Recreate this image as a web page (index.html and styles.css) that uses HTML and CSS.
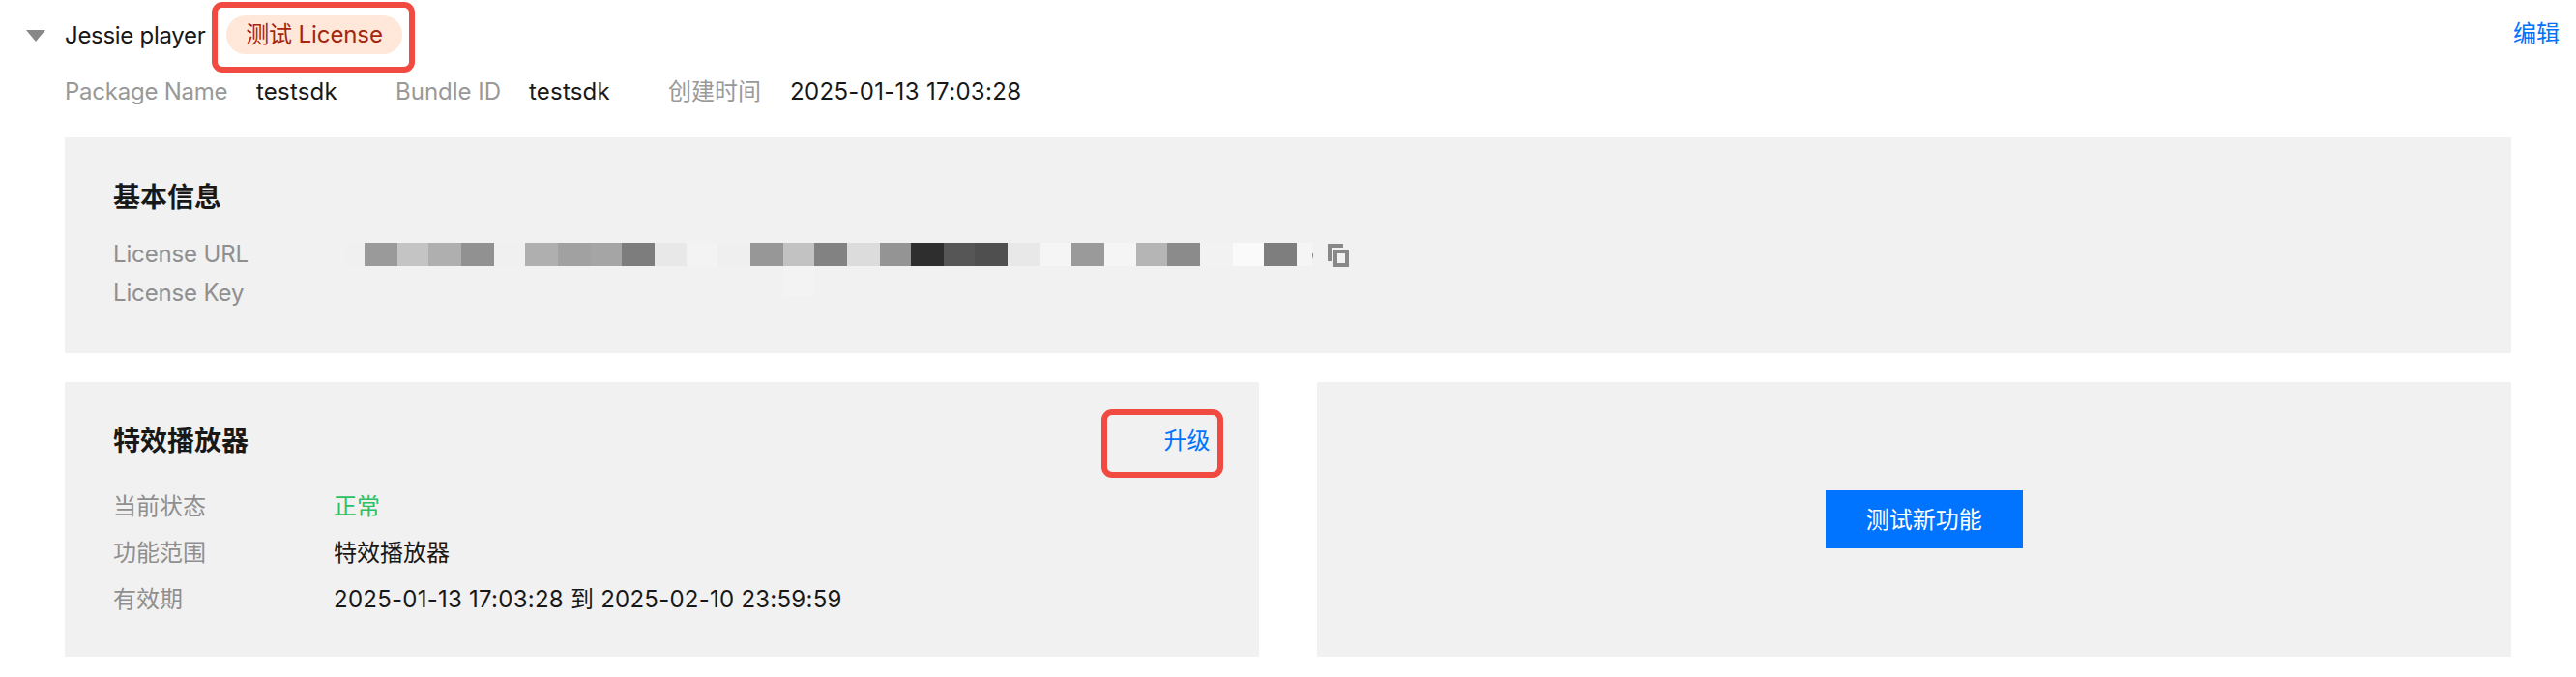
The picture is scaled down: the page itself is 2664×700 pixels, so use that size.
FILE: index.html
```html
<!DOCTYPE html>
<html lang="zh-CN">
  <head>
    <meta charset="UTF-8" />
    <meta name="viewport" content="width=device-width, initial-scale=1.0" />
    <title>License</title>
    <link rel="stylesheet" href="styles.css">
  </head>
  <body>
    <div class="license">
      <div class="header">
        <svg class="arrow" width="20" height="12" viewBox="0 0 20 12">
          <path d="M0 0h20L10 12z" fill="#888" />
        </svg>
        <span class="name">Jessie player</span>
        <div class="tag-wrap">
          <span class="tag">测试 License</span>
          <div class="mark mark-tag"></div>
        </div>
        <a class="link edit">编辑</a>
      </div>

      <div class="meta">
        <span class="label package">Package Name</span>
        <span class="value">testsdk</span>
        <span class="label bundle">Bundle ID</span>
        <span class="value">testsdk</span>
        <span class="label">创建时间</span>
        <span class="value date">2025-01-13 17:03:28</span>
      </div>

      <div class="panel basic">
        <h3>基本信息</h3>
        <div class="row">
          <span class="label">License URL</span>
          <svg class="mosaic" width="1001" height="56" viewBox="0 0 1001 56" shape-rendering="crispEdges">
            <rect x="0" width="20" height="24" fill="#f0f0f0" />
            <rect x="20" width="34" height="23.5" fill="#9a9a9a" />
            <rect x="54" width="32" height="23.5" fill="#c4c4c4" />
            <rect x="86" width="34" height="23.5" fill="#afafaf" />
            <rect x="120" width="34" height="23.5" fill="#919191" />
            <rect x="154" width="32" height="23.5" fill="#f0f0f0" />
            <rect x="186" width="34" height="23.5" fill="#afafaf" />
            <rect x="220" width="34" height="23.5" fill="#a1a1a1" />
            <rect x="254" width="32" height="23.5" fill="#a5a5a5" />
            <rect x="286" width="34" height="23.5" fill="#7d7d7d" />
            <rect x="320" width="33" height="23.5" fill="#e8e8e8" />
            <rect x="353" width="32" height="23.5" fill="#f3f3f3" />
            <rect x="385" width="34" height="23.5" fill="#efefef" />
            <rect x="419" width="34" height="23.5" fill="#979797" />
            <rect x="453" width="32" height="23.5" fill="#c2c2c2" />
            <rect x="485" width="34" height="23.5" fill="#828282" />
            <rect x="519" width="34" height="23.5" fill="#dcdcdc" />
            <rect x="553" width="32" height="23.5" fill="#949494" />
            <rect x="585" width="34" height="23.5" fill="#2e2e2e" />
            <rect x="619" width="32" height="23.5" fill="#565656" />
            <rect x="651" width="34" height="23.5" fill="#4f4f4f" />
            <rect x="685" width="34" height="23.5" fill="#e8e8e8" />
            <rect x="719" width="32" height="23.5" fill="#f5f5f5" />
            <rect x="751" width="34" height="23.5" fill="#9a9a9a" />
            <rect x="785" width="33" height="23.5" fill="#f5f5f5" />
            <rect x="818" width="32" height="23.5" fill="#b5b5b5" />
            <rect x="850" width="34" height="23.5" fill="#8b8b8b" />
            <rect x="884" width="34" height="23.5" fill="#f2f2f2" />
            <rect x="918" width="32" height="23.5" fill="#fafafa" />
            <rect x="950" width="34" height="23.5" fill="#7e7e7e" />
            <rect x="984" width="16" height="23.5" fill="#f5f5f5" />
            <rect x="1000" y="11" width="1" height="4" fill="#8a8a8a" />
            <rect x="1000" y="15" width="1" height="2" fill="#d0d0d0" />
            <rect x="453" y="24" width="32" height="31" fill="#f3f3f3" />
          </svg>
          <svg class="copy" width="22" height="24" viewBox="0 0 22 24">
            <path d="M0 0h16v4H4v14H0z" fill="#888" />
            <path d="M6 6h16v18H6zM10 10v10h8V10z" fill="#888" fill-rule="evenodd" />
          </svg>
        </div>
        <div class="row">
          <span class="label">License Key</span>
        </div>
      </div>

      <div class="cards">
        <div class="panel card">
          <div class="card-head">
            <h3>特效播放器</h3>
            <div class="upgrade">
              <a class="link">升级</a>
              <div class="mark mark-upgrade"></div>
            </div>
          </div>
          <div class="info">
            <span class="label">当前状态</span>
            <span class="value ok">正常</span>
          </div>
          <div class="info">
            <span class="label">功能范围</span>
            <span class="value">特效播放器</span>
          </div>
          <div class="info">
            <span class="label">有效期</span>
            <span class="value period">2025-01-13 17:03:28 到 2025-02-10 23:59:59</span>
          </div>
        </div>
        <div class="panel card empty">
          <button class="btn">测试新功能</button>
        </div>
      </div>
    </div>
  </body>
</html>
```

FILE: styles.css
```css
* {
  margin: 0;
  padding: 0;
  box-sizing: border-box;
}
body {
  background: #fff;
  color: #181818;
  font-family: Inter, "Noto Sans CJK SC", sans-serif;
  font-size: 24px;
  white-space: nowrap;
}
.license {
  height: 700px;
  padding: 16px 67px 0;
}
.label {
  color: #999;
}
.link {
  color: #0073ff;
}

/* header */
.header {
  display: flex;
  align-items: center;
  height: 40px;
  margin: 0 -50px 0 -40px;
}
.arrow {
  margin-right: 20px;
  margin-top: 2px;
}
.name {
  width: 167px;
  letter-spacing: -0.3px;
}
.tag-wrap {
  position: relative;
}
.tag {
  display: block;
  width: 182px;
  height: 40px;
  line-height: 40px;
  border-radius: 20px;
  background: #ffe7d9;
  color: #a3260d;
  text-align: center;
  letter-spacing: -0.1px;
}
.edit {
  margin-left: auto;
  line-height: 36px;
  margin-bottom: 2px;
}
.meta {
  display: flex;
  margin-top: 21px;
  line-height: 36px;
}
.meta .label {
  width: 126px;
}
.meta .package {
  width: 198px;
  letter-spacing: -0.25px;
}
.meta .bundle {
  width: 138px;
}
.meta .value {
  width: 144px;
  letter-spacing: 0.2px;
}
.meta .date {
  letter-spacing: 0.33px;
}

/* red frames round the tag and the upgrade link */
.mark {
  position: absolute;
  border: 6px solid #f14a41;
  border-radius: 11px;
}
.mark-tag {
  top: -14px;
  left: -15px;
  width: 210px;
  height: 73px;
}
.mark-upgrade {
  top: -13px;
  left: -65px;
  width: 126px;
  height: 71px;
}

/* panels */
.panel {
  background: #f1f1f1;
}
.panel .label {
  color: #8f8f8f;
}
h3 {
  font-size: 28px;
  font-weight: 700;
  line-height: 40px;
}
.basic {
  height: 223px;
  margin-top: 29px;
  padding: 42px 50px 0;
}
.row {
  display: flex;
  height: 40px;
  line-height: 40px;
}
.basic h3 {
  margin-bottom: 19px;
}
.row .label {
  width: 240px;
  letter-spacing: -0.15px;
}
.mosaic {
  flex: none;
  margin-top: 8px;
}
.copy {
  margin: 9px 0 0 15px;
}
.cards {
  display: flex;
  gap: 60px;
  margin-top: 30px;
}
.card {
  flex: 1;
  height: 284px;
  padding: 41px 50px 0;
}
.card-head {
  display: flex;
  justify-content: space-between;
  margin-bottom: 24px;
}
.upgrade {
  position: relative;
  line-height: 40px;
}
.info {
  display: flex;
  line-height: 48px;
}
.info .label {
  width: 228px;
}
.info .ok {
  color: #2bc162;
}
.info .period {
  letter-spacing: 0.25px;
}
.empty {
  display: flex;
  justify-content: center;
  align-items: flex-start;
  padding: 112px 40px 0 61px;
}
.btn {
  width: 204px;
  height: 60px;
  padding-bottom: 3px;
  border: none;
  background: #0073ff;
  color: #fff;
  font: inherit;
}
```
